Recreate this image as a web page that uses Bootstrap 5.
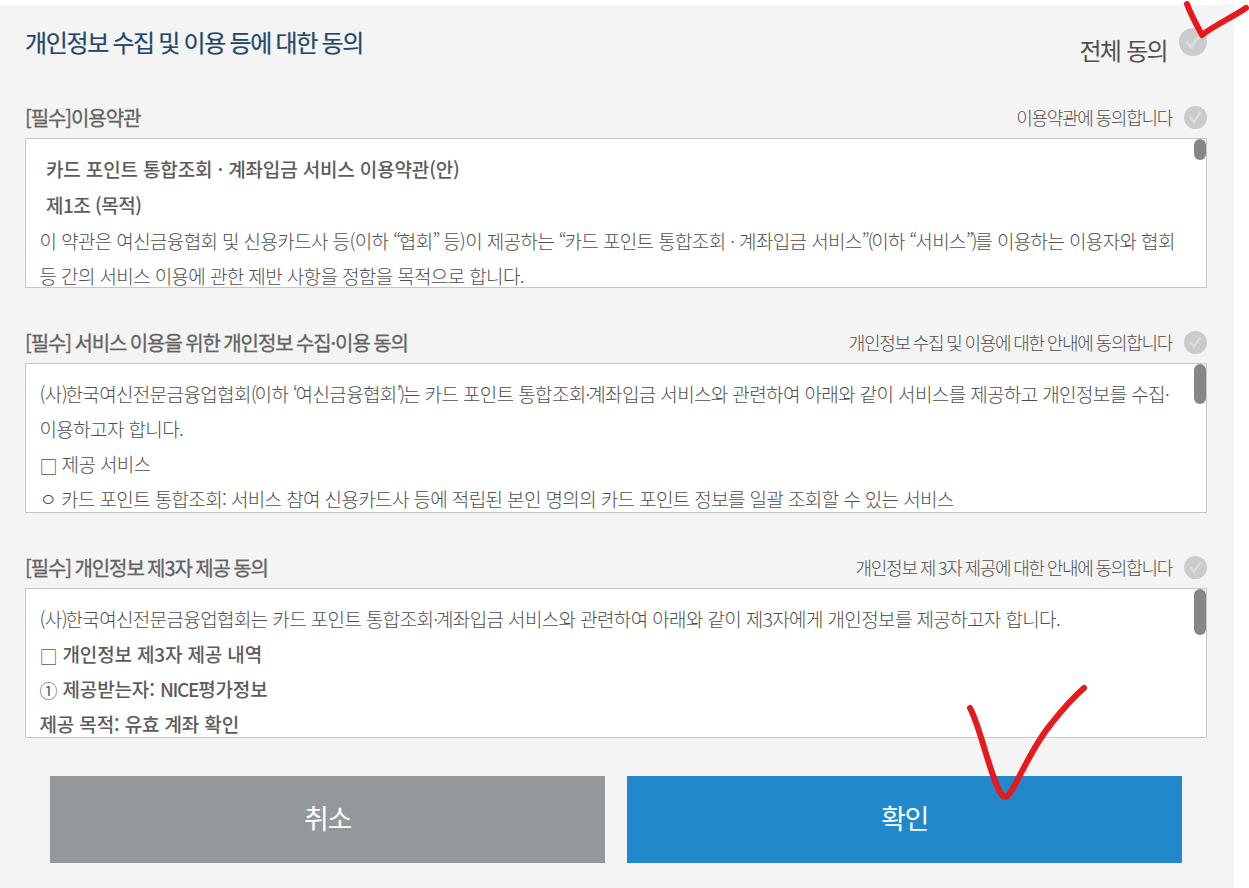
<!DOCTYPE html>
<html lang="ko">
<head>
  <meta charset="UTF-8">
  <meta name="viewport" content="width=device-width, initial-scale=1.0">
  <title>개인정보 수집 및 이용 등에 대한 동의</title>
  <link rel="stylesheet" href="https://cdn.jsdelivr.net/npm/bootstrap@5.3.0/dist/css/bootstrap.min.css">
  <style>
    body { font-family: "Noto Sans CJK KR", sans-serif; color: #4e4e4e; background: #fff; overflow: hidden; }
    .consent { width: 1234px; height: 883px; margin-top: 5px; padding: 0 27px 0 25px; background: #f4f4f4; }
    .consent-head { height: 97px; }
    .consent-title { font-size: 24px; line-height: 36px; letter-spacing: -1.37px; word-spacing: -.8px; color: #23466b; margin-top: 19px; -webkit-text-stroke: .2px; }
    .agree-all { font-size: 24px; line-height: 36px; letter-spacing: -1.7px; word-spacing: 1px; color: #505050; margin-top: 27px; }
    .check-all { width: 28px; height: 28px; margin: 23px 0 0 12px; }
    .term { height: 225px; }
    .term-head { height: 36px; padding-bottom: 5px; }
    .term-title { font-size: 20px; letter-spacing: -1.08px; word-spacing: -1.1px; color: #626262; padding-top: 1px; -webkit-text-stroke: .3px; }
    .term-agree { font-size: 18px; letter-spacing: -1.28px; word-spacing: -.8px; font-weight: 300; }
    .check-one { width: 23px; height: 23px; margin-left: 12px; }
    .term-box { height: 150px; border: 1px solid #c6c6c6; padding: 12px 13px 0 13.5px; font-size: 19px; line-height: 35px; letter-spacing: -.63px; font-weight: 300; }
    .term-box p { height: 35px; margin: 0; white-space: nowrap; }
    .term-box .clause { height: 36px; line-height: 36px; padding-left: 6.5px; }
    .strong-line { font-weight: 500; letter-spacing: -.15px; color: #5c5c5c; }
    .narrow { letter-spacing: -.5px; }
    .latin { letter-spacing: -1.3px; }
    .punct { letter-spacing: -2.2px; }
    .box-mark { font-weight: 400; font-size: 18px; position: relative; top: 2px; }
    .num-mark { position: relative; top: 1px; font-weight: 400; font-size: 18px; }
    .thumb { width: 12px; right: 0; top: 0; border-radius: 6px; background: #868686; }
    .thumb-s { height: 21px; }
    .thumb-m { height: 40px; }
    .thumb-l { height: 46px; }
    .actions { padding: 0 25px; gap: 22px; margin-top: -1px; }
    .actions .btn { height: 87px; padding-bottom: 9px; font-size: 27px; letter-spacing: -1.3px; color: #fff; border: 0; }
    .btn-cancel { background: #94989b; }
    .btn-ok { background: #2288cc; }
    .pen { left: 0; top: 0; pointer-events: none; }
  </style>
</head>
<body>
  <svg width="0" height="0" class="position-absolute">
    <symbol id="check" viewBox="0 0 24 24">
      <circle cx="12" cy="12" r="12" fill="#cbcbcb"/>
      <path d="M6.4 11.5 10.3 16.4 17.2 6.6" fill="none" stroke="#dedede" stroke-width="2.2"/>
    </symbol>
  </svg>

  <main class="consent">
    <div class="consent-head d-flex justify-content-between align-items-start">
      <h1 class="consent-title mb-0 fw-normal">개인정보 수집 및 이용 등에 대한 동의</h1>
      <div class="d-flex align-items-start">
        <span class="agree-all">전체 동의</span>
        <svg class="check-all"><use href="#check"/></svg>
      </div>
    </div>

    <section class="term">
      <div class="term-head d-flex justify-content-between align-items-center">
        <span class="term-title">[필수]이용약관</span>
        <div class="d-flex align-items-center">
          <span class="term-agree">이용약관에 동의합니다</span>
          <svg class="check-one"><use href="#check"/></svg>
        </div>
      </div>
      <div class="term-box bg-white position-relative overflow-hidden">
        <p class="strong-line clause">카드 포인트 통합조회 · 계좌입금 서비스 이용약관(안)</p>
        <p class="strong-line clause narrow">제1조 (목적)</p>
        <p>이 약관은 여신금융협회 및 신용카드사 등(이하 <span class="punct">“</span>협회<span class="punct">”</span> 등)이 제공하는 <span class="punct">“</span>카드 포인트 통합조회 · 계좌입금 서비스<span class="punct">”(</span>이하 <span class="punct">“</span>서비스<span class="punct">”)</span>를 이용하는 이용자와 협회</p>
        <p>등 간의 서비스 이용에 관한 제반 사항을 정함을 목적으로 합니다.</p>
        <div class="thumb thumb-s position-absolute"></div>
      </div>
    </section>

    <section class="term">
      <div class="term-head d-flex justify-content-between align-items-center">
        <span class="term-title">[필수] 서비스 이용을 위한 개인정보 수집·이용 동의</span>
        <div class="d-flex align-items-center">
          <span class="term-agree">개인정보 수집 및 이용에 대한 안내에 동의합니다</span>
          <svg class="check-one"><use href="#check"/></svg>
        </div>
      </div>
      <div class="term-box bg-white position-relative overflow-hidden">
        <p>(사<span class="punct">)</span>한국여신전문금융업협회<span class="punct">(</span>이하 <span class="punct">‘</span>여신금융협회<span class="punct">’)</span>는 카드 포인트 통합조회<span class="punct">·</span>계좌입금 서비스와 관련하여 아래와 같이 서비스를 제공하고 개인정보를 수집·</p>
        <p>이용하고자 합니다.</p>
        <p><span class="box-mark">□</span> 제공 서비스</p>
        <p>ㅇ 카드 포인트 통합조회: 서비스 참여 신용카드사 등에 적립된 본인 명의의 카드 포인트 정보를 일괄 조회할 수 있는 서비스</p>
        <div class="thumb thumb-m position-absolute"></div>
      </div>
    </section>

    <section class="term">
      <div class="term-head d-flex justify-content-between align-items-center">
        <span class="term-title">[필수] 개인정보 제3자 제공 동의</span>
        <div class="d-flex align-items-center">
          <span class="term-agree">개인정보 제 3자 제공에 대한 안내에 동의합니다</span>
          <svg class="check-one"><use href="#check"/></svg>
        </div>
      </div>
      <div class="term-box bg-white position-relative overflow-hidden">
        <p>(사<span class="punct">)</span>한국여신전문금융업협회는 카드 포인트 통합조회<span class="punct">·</span>계좌입금 서비스와 관련하여 아래와 같이 제3자에게 개인정보를 제공하고자 합니다.</p>
        <p class="strong-line"><span class="box-mark">□</span> 개인정보 제3자 제공 내역</p>
        <p class="strong-line"><span class="num-mark">①</span> 제공받는자: <span class="latin">NICE</span>평가정보</p>
        <p class="strong-line">제공 목적: 유효 계좌 확인</p>
        <div class="thumb thumb-l position-absolute"></div>
      </div>
    </section>

    <div class="actions d-flex">
      <button type="button" class="btn btn-cancel rounded-0 flex-fill">취소</button>
      <button type="button" class="btn btn-ok rounded-0 flex-fill">확인</button>
    </div>
  </main>

  <!-- red pen marks over the two controls to press -->
  <svg class="pen position-absolute" width="1249" height="888" fill="none" stroke="#e8191c" stroke-width="6" stroke-linecap="round" stroke-linejoin="round">
    <path d="M1187 4C1191 15 1196 24 1202 35C1215 25 1231 18 1246 8"/>
    <path d="M970 708C980 726 990 775 1000 792Q1005 801 1010 793C1022 774 1032 747 1051 724Q1069 701 1084 688"/>
  </svg>
  <script src="https://cdn.jsdelivr.net/npm/bootstrap@5.3.0/dist/js/bootstrap.bundle.min.js"></script>
</body>
</html>
